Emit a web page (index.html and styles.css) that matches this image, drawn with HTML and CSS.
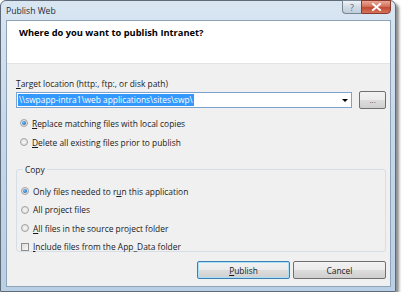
FILE: index.html
```html
<!DOCTYPE html>
<html lang="en">
<head>
    <meta charset="UTF-8">
    <title>Publish Web</title>
    <link rel="stylesheet" href="styles.css">
</head>
<body>
    <div class="window">
        <div class="titlebar">
            <span class="title">Publish Web</span>
            <div class="caption-buttons">
                <div class="cap-btn help">?</div>
                <div class="cap-btn close">
                    <svg width="11" height="8" viewBox="0 0 11 8">
                        <path d="M2 1 L9 7 M9 1 L2 7" stroke="#fff" stroke-width="2" stroke-linecap="square"/>
                    </svg>
                </div>
            </div>
        </div>

        <div class="client">
            <header class="banner">
                <h1>Where do you want to publish Intranet?</h1>
            </header>

            <div class="body">
                <label class="field-label"><u>T</u>arget location (http:, ftp:, or disk path)</label>
                <div class="location-row">
                    <div class="combo">
                        <span class="combo-text">\\swpapp-intra1\web applications\sites\swp\</span>
                        <span class="combo-arrow"></span>
                    </div>
                    <button class="btn browse">...</button>
                </div>

                <div class="options">
                    <div class="option"><span class="radio checked"></span><span><u>R</u>eplace matching files with local copies</span></div>
                    <div class="option"><span class="radio"></span><span><u>D</u>elete all existing files prior to publish</span></div>
                </div>

                <fieldset class="group">
                    <legend>Copy</legend>
                    <div class="option"><span class="radio checked"></span><span>Only files needed to r<u>u</u>n this application</span></div>
                    <div class="option"><span class="radio"></span><span>All pro<u>j</u>ect files</span></div>
                    <div class="option"><span class="radio"></span><span><u>A</u>ll files in the source project folder</span></div>
                    <div class="option"><span class="check"></span><span><u>I</u>nclude files from the App_Data folder</span></div>
                </fieldset>

                <div class="actions">
                    <button class="btn default"><u>P</u>ublish</button>
                    <button class="btn">Cancel</button>
                </div>
            </div>
        </div>
    </div>
</body>
</html>
```

FILE: styles.css
```css
body {
    margin: 0;
    background: #fff;
    font-family: 'Open Sans', 'DejaVu Sans', sans-serif;
    font-size: 8.4px;
    color: #1a1a1a;
}

.window {
    width: 396px;
    height: 292px;
    box-sizing: border-box;
    padding: 0 4px 4px 5px;
    border: 1px solid #5f6b78;
    border-radius: 6px 6px 0 0;
    background: linear-gradient(180deg, #d9e6f2 0%, #c6d9ec 40%, #b9cfe5 100%);
    box-shadow: 3px 3px 3px rgba(0, 0, 0, 0.45);
    display: flex;
    flex-direction: column;
}

.titlebar {
    height: 19px;
    display: flex;
    align-items: flex-start;
    justify-content: space-between;
}

.title {
    margin-top: 4px;
    color: #1c2a38;
    font-size: 8.6px;
}

.caption-buttons {
    display: flex;
    margin-top: -1px;
}

.cap-btn {
    height: 14px;
    box-sizing: border-box;
    border: 1px solid #7a8592;
    display: flex;
    align-items: center;
    justify-content: center;
}

.help {
    width: 19px;
    border-radius: 0 0 0 4px;
    border-right: none;
    background: linear-gradient(180deg, #eef3f8 0%, #d0dbe6 50%, #bfcedd 100%);
    color: #5a6775;
    font-size: 9px;
}

.close {
    width: 30px;
    border-radius: 0 0 4px 0;
    border-color: #8a3a2c;
    background: linear-gradient(180deg, #e9a898 0%, #d4715c 45%, #c04a32 55%, #d5735c 100%);
}

.client {
    flex: 1;
    border: 1px solid #8ea3b8;
    background: #f0f0f0;
    display: flex;
    flex-direction: column;
}

.banner {
    height: 43px;
    background: #fff;
    border-bottom: 1px solid #e3e3e3;
    box-sizing: border-box;
    padding: 5px 0 0 12px;
}

.banner h1 {
    margin: 0;
    font-size: 9.3px;
    font-weight: bold;
    color: #000;
}

.body {
    padding: 14px 4px 0 9px;
    display: flex;
    flex-direction: column;
}

.field-label {
    display: block;
    margin-bottom: 2px;
}

.location-row {
    display: flex;
    align-items: center;
    gap: 7px;
}

.combo {
    width: 339px;
    height: 16px;
    box-sizing: border-box;
    border: 1px solid #7da2ce;
    background: #fff;
    display: flex;
    align-items: center;
    justify-content: space-between;
    padding: 0 3px 0 1px;
}

.combo-text {
    background: #3399ff;
    color: #fff;
    padding: 0 1px;
    line-height: 12px;
}

.combo-arrow {
    width: 0;
    height: 0;
    border-left: 3px solid transparent;
    border-right: 3px solid transparent;
    border-top: 3px solid #000;
}

.btn {
    font-family: inherit;
    font-size: 8.4px;
    color: #1a1a1a;
    height: 18px;
    box-sizing: border-box;
    border: 1px solid #707070;
    border-radius: 2px;
    background: linear-gradient(180deg, #f2f2f2 0%, #ebebeb 50%, #dddddd 51%, #cfcfcf 100%);
    padding: 0;
}

.browse {
    width: 27px;
    font-size: 8px;
    line-height: 10px;
    color: #555;
}

.options {
    margin-top: 7px;
    padding-left: 4px;
    display: flex;
    flex-direction: column;
    gap: 5px;
}

.option {
    display: flex;
    align-items: center;
    gap: 4px;
    height: 14px;
}

.radio {
    width: 8px;
    height: 8px;
    box-sizing: border-box;
    border-radius: 50%;
    border: 1px solid #a2a2a2;
    background: radial-gradient(circle, #f6f6f6 0%, #dcdcdc 100%);
    position: relative;
}

.radio.checked::after {
    content: '';
    position: absolute;
    left: 1px;
    top: 1px;
    width: 4px;
    height: 4px;
    border-radius: 50%;
    background: radial-gradient(circle at 40% 40%, #7fc4ff 0%, #1d6fc0 70%, #0a4b8c 100%);
}

.check {
    width: 8px;
    height: 8px;
    box-sizing: border-box;
    border: 1px solid #8f8f8f;
    background: linear-gradient(135deg, #dcdcdc 0%, #f8f8f8 100%);
}

.group {
    margin: 15px 0 0 0;
    padding: 9px 0 4px 4px;
    border: 1px solid #d5dfe5;
    border-radius: 3px;
    display: flex;
    flex-direction: column;
    gap: 4.5px;
    height: 88px;
    box-sizing: border-box;
}

.group legend {
    padding: 0 2px;
    margin-left: 2px;
}

.actions {
    margin-top: 9px;
    display: flex;
    justify-content: flex-end;
    gap: 3px;
}

.actions .btn {
    width: 93px;
}

.btn.default {
    border-color: #3c7fb1;
    box-shadow: inset 0 0 0 1px #a8e0f8;
}
```
